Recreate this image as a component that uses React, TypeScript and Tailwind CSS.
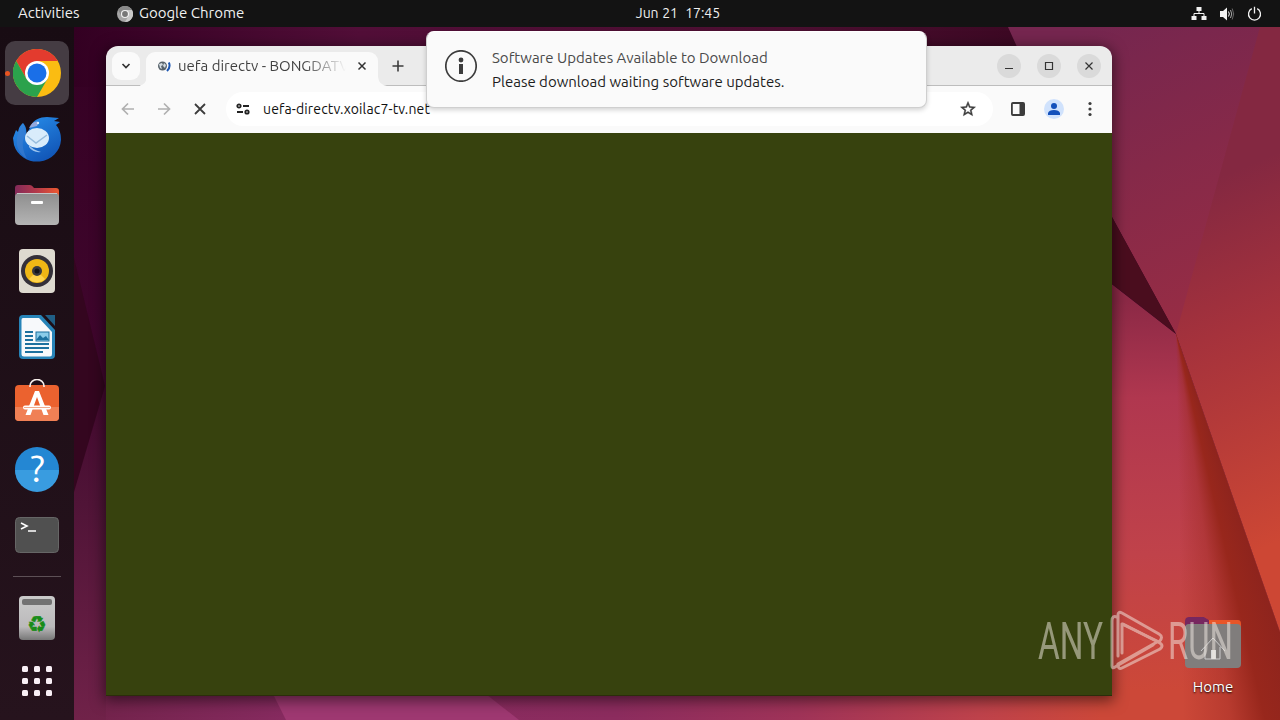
import type { ReactNode } from 'react';

function Wallpaper() {
    return (
        <div className="absolute inset-0">
            <svg width="1280" height="720" viewBox="0 0 1280 720">
                <defs>
                    <linearGradient id="left" x1="0" y1="0" x2="0" y2="1">
                        <stop offset="0" stopColor="#330022" />
                        <stop offset="0.5" stopColor="#40062d" />
                        <stop offset="0.7" stopColor="#501437" />
                        <stop offset="1" stopColor="#702249" />
                    </linearGradient>
                    <linearGradient id="top" x1="0" y1="0" x2="1" y2="0">
                        <stop offset="0" stopColor="#330022" />
                        <stop offset="0.3" stopColor="#520e38" />
                        <stop offset="0.75" stopColor="#4c0f31" />
                        <stop offset="1" stopColor="#3c0823" />
                    </linearGradient>
                    <linearGradient id="bottom" gradientUnits="userSpaceOnUse" x1="74" y1="0" x2="1280" y2="0">
                        <stop offset="0" stopColor="#702249" />
                        <stop offset="0.18" stopColor="#872b60" />
                        <stop offset="0.45" stopColor="#8c2c5e" />
                        <stop offset="0.6" stopColor="#9f3358" />
                        <stop offset="0.75" stopColor="#be424b" />
                        <stop offset="0.86" stopColor="#cd4838" />
                        <stop offset="1" stopColor="#c94532" />
                    </linearGradient>
                    <linearGradient id="upper" gradientUnits="userSpaceOnUse" x1="1090" y1="27" x2="1220" y2="333">
                        <stop offset="0" stopColor="#75264f" />
                        <stop offset="0.45" stopColor="#852949" />
                        <stop offset="1" stopColor="#992d44" />
                    </linearGradient>
                    <linearGradient id="right" gradientUnits="userSpaceOnUse" x1="1190" y1="190" x2="1330" y2="520">
                        <stop offset="0" stopColor="#842841" />
                        <stop offset="0.4" stopColor="#a5323c" />
                        <stop offset="1" stopColor="#cd4734" />
                    </linearGradient>
                    <linearGradient id="lower" gradientUnits="userSpaceOnUse" x1="1150" y1="300" x2="1160" y2="690">
                        <stop offset="0" stopColor="#8c2946" />
                        <stop offset="0.25" stopColor="#b0374f" />
                        <stop offset="0.65" stopColor="#c0424a" />
                        <stop offset="1" stopColor="#cc4838" />
                    </linearGradient>
                </defs>
                <rect width="1280" height="720" fill="url(#left)" />
                <path d="M106 696H1280V720H106Z" fill="url(#bottom)" />
                <path d="M74 258L105 386L74 492Z" fill="#34061f" />
                <path d="M266 680L286 720H519L468 680Z" fill="#9e3871" />
                <rect x="74" y="27" width="950" height="60" fill="url(#top)" />
                <path d="M1008 27H1280V334H1176L1112 217L1023 60Z" fill="url(#upper)" />
                <path d="M1260 27H1280V632L1176 334Z" fill="url(#right)" />
                <path d="M1100 275L1176 334L1280 632V720H1100Z" fill="url(#lower)" />
                <path d="M1100 202L1112 217L1176 334L1112 284L1100 276Z" fill="#4a0d1e" />
            </svg>
            <div className="absolute inset-0 bg-[conic-gradient(at_1176px_334px,#8e241d_160.800deg,#98271c_167deg,rgba(160,43,36,0.45)_172deg,rgba(170,50,40,0)_179deg)] [clip-path:polygon(1176px_334px,1280px_632px,1280px_720px,1176px_720px)]" />
        </div>
    );
}

function TopBar() {
    return (
        <header className="relative flex h-[27px] items-center bg-[#131313] text-[15px] text-[#f0f0f0]">
            <span className="ml-[18px] w-[99px]">Activities</span>
            <svg width="16" height="16" viewBox="0 0 16 16">
                <circle cx="8" cy="8" r="8" fill="#a5a5a5" />
                <path d="M8 4H15A8 8 0 0 1 8 16L11.5 10Z" fill="#c8c8c8" />
                <path d="M1 4A8 8 0 0 1 15 4H8L4.5 10Z" fill="#888" />
                <circle cx="8" cy="8" r="3.5" fill="#777" stroke="#f1f1f1" strokeWidth="1.2" />
            </svg>
            <span className="ml-1.5 grow">Google Chrome</span>
            <span className="mr-[471px] text-[14px] tracking-[-0.05px] whitespace-pre [word-spacing:0.5px]">Jun 21  17:45</span>
            <div className="mr-[17px] flex items-center gap-3">
                <svg width="16" height="16" viewBox="0 0 16 16" fill="#f2f2f2">
                    <path d="M5.5 1h5v4h-5zM.5 10h5v4h-5zM10.500 10h5v4h-5z" />
                    <path d="M8 4v3.500M3 10.500v-3h10v3" fill="none" stroke="#f2f2f2" />
                </svg>
                <svg width="16" height="16" viewBox="0 0 16 16" fill="none" stroke="#f2f2f2">
                    <path d="M1 5h3l4-3.500v13L4 11H1z" fill="#f2f2f2" stroke="none" />
                    <path d="M9.500 5.500q1.700 2.500 0 5" />
                    <path d="M11.500 4q2.500 4 0 8" stroke="#aaa" />
                    <path d="M13.200 2.500q3 5.500 0 11" stroke="#666" />
                </svg>
                <svg width="16" height="16" viewBox="0 0 16 16" fill="none" stroke="#f2f2f2" strokeWidth="1.300">
                    <path d="M4.800 2.700a6 6 0 1 0 5.400 0M7.500 .8v6.700" />
                </svg>
            </div>
        </header>
    );
}

function DockItem({ active, children }: { active?: boolean; children: ReactNode }) {
    return (
        <div className={active ? 'relative flex size-16 shrink-0 items-center justify-center rounded-[10px] bg-[#453c43]' : 'flex size-16 shrink-0 items-center justify-center'}>
            {active && <span className="absolute left-0 size-[5px] rounded-full bg-[#e95420]" />}
            <svg width="48" height="48" viewBox="0 0 48 48">{children}</svg>
        </div>
    );
}

const DOTS = [11, 23, 35];

function Dock() {
    return (
        <aside className="relative flex w-[74px] flex-col items-center gap-0.5 bg-linear-to-b from-[#180c13] to-[#26131d] pt-3.5">
            <DockItem active>
                <circle cx="24" cy="24" r="24" fill="#fbbc12" />
                <path d="M3.200 12A24 24 0 0 1 44.800 12H24L13.600 30Z" fill="#e33b2e" />
                <path d="M3.200 12A24 24 0 0 0 24 48L34.400 30H13.600Z" fill="#2ba24c" />
                <circle cx="24" cy="24" r="12" fill="#fff" />
                <circle cx="24" cy="24" r="9.500" fill="#1a6fe8" />
            </DockItem>
            <DockItem>
                <defs>
                    <linearGradient id="bird" x1="0" y1="0" x2="0.6" y2="1">
                        <stop offset="0" stopColor="#2a93ef" />
                        <stop offset="1" stopColor="#1257b8" />
                    </linearGradient>
                </defs>
                <g transform="translate(0 1)">
                    <path d="M0 22L3 14 5 16Q6 10 10 7C13 10 14 15 13 19L18 10C20 4 27 1 34 1L46 2 41 5 47 6 43 9C47 14 48 18 48 24A24 23 0 0 1 1 29Z" fill="url(#bird)" />
                    <path d="M5 17Q0 34 14 43Q6 27 13 19L10 7Z" fill="#3f7fd0" fillOpacity="0.600" />
                    <path d="M16 12Q20 4 26 6L24 10Z" fill="#93a8dd" />
                    <circle cx="25" cy="7" r="1.200" fill="#d8ecff" />
                    <path d="M16 31Q20 37 28 36Q20 34 16 29" fill="#9cc4ee" />
                    <ellipse cx="24" cy="22" rx="12" ry="10" fill="#d9ecfb" />
                    <path d="M14 20L23 27 34 19" fill="none" stroke="#98bddd" strokeWidth="1.500" />
                </g>
            </DockItem>
            <DockItem>
                <defs>
                    <linearGradient id="tab" x1="0" x2="1">
                        <stop offset="0" stopColor="#822a59" />
                        <stop offset="0.500" stopColor="#b53a4a" />
                        <stop offset="1" stopColor="#ed5930" />
                    </linearGradient>
                    <linearGradient id="silver" x1="0" y1="0" x2="0" y2="1">
                        <stop offset="0" stopColor="#8e8e8e" />
                        <stop offset="1" stopColor="#b4b4b4" />
                    </linearGradient>
                </defs>
                <path d="M2 15V7Q2 4 5 4H17Q19 4 21 7H43Q46 7 46 10V18H2Z" fill="url(#tab)" />
                <rect x="2" y="12" width="44" height="32" rx="4" fill="url(#silver)" />
                <path d="M4 12.500H44" stroke="#c6c6c6" />
                <rect x="18" y="20" width="12" height="3" rx="1" fill="#fff" />
            </DockItem>
            <DockItem>
                <rect x="6" y="2" width="36" height="44" rx="4" fill="#dedad0" />
                <circle cx="24" cy="24" r="16" fill="#343039" />
                <circle cx="24" cy="24" r="12" fill="#efb715" />
                <path d="M16 32A11.500 11.500 0 0 0 32 32L24 24Z" fill="#ffd34a" />
                <circle cx="24" cy="24" r="5" fill="#3a3a3e" />
                <circle cx="24" cy="24" r="2.500" fill="#15151a" />
            </DockItem>
            <DockItem>
                <path d="M10 2H28L42 17V42Q42 46 38 46H10Q6 46 6 42V6Q6 2 10 2Z" fill="#2784b8" />
                <path d="M10 5H26L39 19V41Q39 43.500 37 43.500H11Q8.500 43.500 8.500 41V7Q8.500 5 10 5Z" fill="#f7f9fb" />
                <path d="M32 2H42V13Z" fill="#205f86" />
                <path d="M12 19H20M12 23H20M12 27H20M12 31H36M12 35H36M12 39H30" stroke="#1d719f" strokeWidth="2" />
                <rect x="23" y="19" width="13" height="9" fill="#8bcce9" stroke="#1d719f" />
                <path d="M23 27L27 22 30 25 33 23 36 27Z" fill="#1d719f" />
            </DockItem>
            <DockItem>
                <rect x="2" y="6" width="44" height="36" rx="4" fill="#eb622f" />
                <path d="M2 28H46V38Q46 42 42 42H6Q2 42 2 38Z" fill="#f08055" />
                <path d="M17 8V7A7 6.500 0 0 1 31 7V8" fill="none" stroke="#f8f0ec" strokeWidth="1.600" />
                <path d="M22 12H26L35.500 36H30.500L24 18 17.500 36H12.500Z" fill="#fff" />
                <path d="M12 28.500H36" stroke="#fff" strokeWidth="4" strokeLinecap="round" />
                <path d="M11 28.500H37" stroke="#ef9470" strokeWidth="0.800" />
            </DockItem>
            <DockItem>
                <circle cx="24" cy="24" r="22" fill="#2487d3" />
                <path d="M2 25H46A22 22 0 0 1 2 25Z" fill="#399ce0" />
                <text x="24.500" y="37" textAnchor="middle" fontSize="37" fill="#fff">?</text>
            </DockItem>
            <DockItem>
                <rect x="2.500" y="6.500" width="43" height="35" rx="4" fill="#505050" stroke="#666" />
                <path d="M8 12L14 15 8 18M15 20H23" fill="none" stroke="#fff" strokeWidth="1.600" />
            </DockItem>
            <div className="mt-[7px] mb-[7px] h-px w-12 shrink-0 bg-[#5d5056]" />
            <DockItem>
                <defs>
                    <linearGradient id="bin" x1="0" y1="0" x2="0" y2="1">
                        <stop offset="0.100" stopColor="#c9c9c9" />
                        <stop offset="0.700" stopColor="#bbb9bb" />
                        <stop offset="1" stopColor="#777" />
                    </linearGradient>
                </defs>
                <rect x="6" y="2" width="36" height="44" rx="4" fill="url(#bin)" />
                <rect x="9" y="5" width="30" height="6" rx="2" fill="#727272" />
                <text x="24" y="38" textAnchor="middle" fontSize="22" fill="#188c18" stroke="#188c18" strokeWidth="0.500" fontFamily="DejaVu Sans">♻</text>
            </DockItem>
            <div className="-mt-[3px]">
                <DockItem>
                    {DOTS.map((y) => DOTS.map((x) => (
                        <rect key={`${x}-${y}`} x={x - 2} y={y - 2} width="6" height="6" rx="1.500" fill="#f8eff5" />
                    )))}
                </DockItem>
            </div>
        </aside>
    );
}

function TabStrip() {
    return (
        <div className="flex h-10 border-b border-[#bdbdbd] bg-[#ebebeb]">
            <div className="mt-1.5 ml-1.5 flex size-7 items-center justify-center rounded-[9px] bg-[#fafafa]">
                <svg width="10" height="10" viewBox="0 0 10 10" fill="none" stroke="#333" strokeWidth="1.700"><path d="M1.500 3L5 6.500 8.500 3" /></svg>
            </div>
            <svg className="-mr-px mt-[31px]" width="7" height="9"><path d="M7 0V9H-2Q6 8 7 0" fill="#fafafa" /></svg>
            <div className="mt-1.5 flex h-[34px] w-[232px] items-center rounded-t-[9px] bg-[#fafafa] pb-1.5">
                <svg className="ml-[11px]" width="14" height="14" viewBox="0 0 14 14">
                    <circle cx="5.500" cy="7" r="4.500" fill="#58636b" />
                    <path d="M2 5L5 4 6 6 4 7 5 10 3 9ZM7 4L9 6 8 9 6 7Z" fill="#d5dde2" />
                    <path d="M11.800 3.500Q14 8 10 12" fill="none" stroke="#1d57b3" strokeWidth="2" />
                </svg>
                <span className="ml-[7px] w-[168px] overflow-hidden bg-linear-to-r from-[#3f3f3f] from-75% to-transparent bg-clip-text text-[15px] whitespace-nowrap text-transparent">uefa directv - BONGDATV</span>
                <svg className="ml-[11px]" width="10" height="10" viewBox="0 0 10 10" stroke="#333" strokeWidth="1.500"><path d="M1.500 1.500l7 7M8.500 1.500l-7 7" /></svg>
            </div>
            <svg className="mt-[31px]" width="9" height="9"><path d="M0 0V9H9Q1 8 0 0" fill="#fafafa" /></svg>
            <svg className="mt-[14px] ml-[5px]" width="12" height="12" stroke="#3c3c3c" strokeWidth="1.600"><path d="M6 .5v11M.5 6h11" /></svg>
            <div className="mt-2 mr-[11px] ml-auto flex gap-4">
                <WindowButton><path d="M4 10.500h8" /></WindowButton>
                <WindowButton><path d="M4.500 4.500h7v7h-7z" /></WindowButton>
                <WindowButton><path d="M4.500 4.500l7 7M11.500 4.500l-7 7" /></WindowButton>
            </div>
        </div>
    );
}

function WindowButton({ children }: { children: ReactNode }) {
    return (
        <div className="flex size-6 items-center justify-center rounded-full bg-[#dadada]">
            <svg width="16" height="16" fill="none" stroke="#333" strokeWidth="1.200">{children}</svg>
        </div>
    );
}

function Toolbar() {
    return (
        <div className="flex h-[47px] items-center bg-[#fafafa] pb-px">
            <svg className="ml-[15px]" width="14" height="14" fill="none" stroke="#b0b0b0" strokeWidth="1.700"><path d="M13 7H2M7 1.500L1.500 7 7 12.500" /></svg>
            <svg className="ml-[22px]" width="14" height="14" fill="none" stroke="#b0b0b0" strokeWidth="1.700"><path d="M1 7h11M7 1.500L12.500 7 7 12.500" /></svg>
            <svg className="ml-[23px]" width="12" height="12" stroke="#3c3c3c" strokeWidth="1.800"><path d="M1 1l10 10M11 1L1 11" /></svg>
            <div className="ml-5 flex h-[34px] w-[767px] items-center rounded-full bg-white">
                <svg className="ml-2.5" width="14" height="12" fill="none" stroke="#222" strokeWidth="1.800">
                    <circle cx="3" cy="3" r="1.700" /><path d="M7 3h6M1 9h6" /><circle cx="11" cy="9" r="1.700" />
                </svg>
                <span className="ml-[13px] text-[14px] tracking-[0.14px] text-[#111]">uefa-directv.xoilac7-tv.net</span>
                <svg className="mr-4 ml-auto" width="18" height="18" viewBox="0 0 24 24" fill="#3c3c3c" stroke="#3c3c3c" strokeWidth="0.600">
                    <path d="M22 9.240l-7.190-.62L12 2 9.190 8.630 2 9.240l5.460 4.730L5.820 21 12 17.270 18.180 21l-1.630-7.030L22 9.240zM12 15.400l-3.760 2.270 1-4.280-3.320-2.880 4.380-.38L12 6.100l1.710 4.040 4.380.38-3.320 2.880 1 4.280L12 15.400z" />
                </svg>
            </div>
            <svg className="ml-[17px]" width="16" height="16"><rect x="1.900" y="2" width="12.200" height="12" rx="1" fill="none" stroke="#3c3c3c" strokeWidth="1.800" /><path d="M9.500 2H14v12H9.500z" fill="#3c3c3c" /></svg>
            <svg className="ml-[18px]" width="20" height="20">
                <circle cx="10" cy="10" r="10" fill="#d0e2fc" /><circle cx="10" cy="7" r="3" fill="#1451bb" /><path d="M4 16v-2q1-3 6-3t6 3v2z" fill="#1451bb" />
            </svg>
            <svg className="ml-[23px]" width="6" height="16" fill="#3c3c3c"><circle cx="3" cy="2.500" r="1.600" /><circle cx="3" cy="8" r="1.600" /><circle cx="3" cy="13.500" r="1.600" /></svg>
        </div>
    );
}

function BrowserWindow() {
    return (
        <section className="absolute top-[46px] left-[106px] flex h-[650px] w-[1006px] flex-col overflow-hidden rounded-t-xl shadow-[0_3px_14px_2px_rgba(0,0,0,0.5)]">
            <TabStrip />
            <Toolbar />
            <main className="grow border-b border-[#2c2d0b] bg-[#37420e]" />
        </section>
    );
}

function Notification() {
    return (
        <div className="absolute top-[31px] left-[426px] flex h-[77px] w-[501px] rounded-lg border border-[#cfcfcf] border-t-white bg-[#fafafa] shadow-[0_2px_5px_rgba(0,0,0,0.18)]">
            <svg className="mt-[18px] ml-[18px]" width="32" height="32">
                <circle cx="16" cy="16" r="15.200" fill="none" stroke="#3c3c3c" strokeWidth="1.700" />
                <circle cx="16" cy="10" r="2.400" fill="#3c3c3c" />
                <path d="M14 14h4v10h-4z" fill="#3c3c3c" />
            </svg>
            <div className="mt-3.5 ml-[15px] text-[15px] leading-6">
                <p className="text-[#4a4a4a]">Software Updates Available to Download</p>
                <p className="text-[#1d1d1d]">Please download waiting software updates.</p>
            </div>
        </div>
    );
}

function HomeFolder() {
    return (
        <div className="absolute top-[614px] left-[1181px] flex w-16 flex-col items-center">
            <svg width="64" height="58">
                <path d="M4 13V7Q4 3 8 3H23L28 6H57Q60 6 60 10V15H4Z" fill="#e85528" />
                <path d="M4 13V7Q4 3 8 3H23L28 6V12H4Z" fill="#77275f" />
                <rect x="4" y="10" width="56" height="44" rx="4" fill="#807d7c" />
                <path d="M20 37L32 24 44 37M24 33V45H39V33" fill="none" stroke="#ccc" />
                <rect x="30" y="36" width="5" height="9" fill="#d8d8d8" />
            </svg>
            <span className="mt-1 text-[15px] leading-[22px] text-white [text-shadow:0_1px_2px_#000]">Home</span>
        </div>
    );
}

function Watermark() {
    return (
        <svg className="absolute top-[608px] left-[1036px] opacity-50" width="230" height="80" fill="#f5eee6">
            <text x="2" y="51" fontSize="51" textLength="65" lengthAdjust="spacingAndGlyphs" fontFamily="Roboto">ANY</text>
            <text x="132" y="51" fontSize="51" textLength="65" lengthAdjust="spacingAndGlyphs" fontFamily="Roboto">RUN</text>
            <g fill="none" stroke="#f5eee6" strokeWidth="3" strokeLinejoin="round" strokeLinecap="round">
                <path d="M81 9Q76 7 76 13V58Q76 61 79 59L117 37" />
                <path d="M82 48V7Q82 3 86 5L123 26Q128 29 123 34L86 16V45" />
                <path d="M87 16L124 35Q128 38 124 41L86 60Q82 62 82 56L121 34" />
            </g>
        </svg>
    );
}

export default function App() {
    return (
        <div className="relative flex h-[720px] w-[1280px] flex-col overflow-hidden font-['Ubuntu','Noto_Sans',sans-serif]">
            <Wallpaper />
            <TopBar />
            <div className="flex grow">
                <Dock />
            </div>
            <BrowserWindow />
            <HomeFolder />
            <Notification />
            <Watermark />
        </div>
    );
}
